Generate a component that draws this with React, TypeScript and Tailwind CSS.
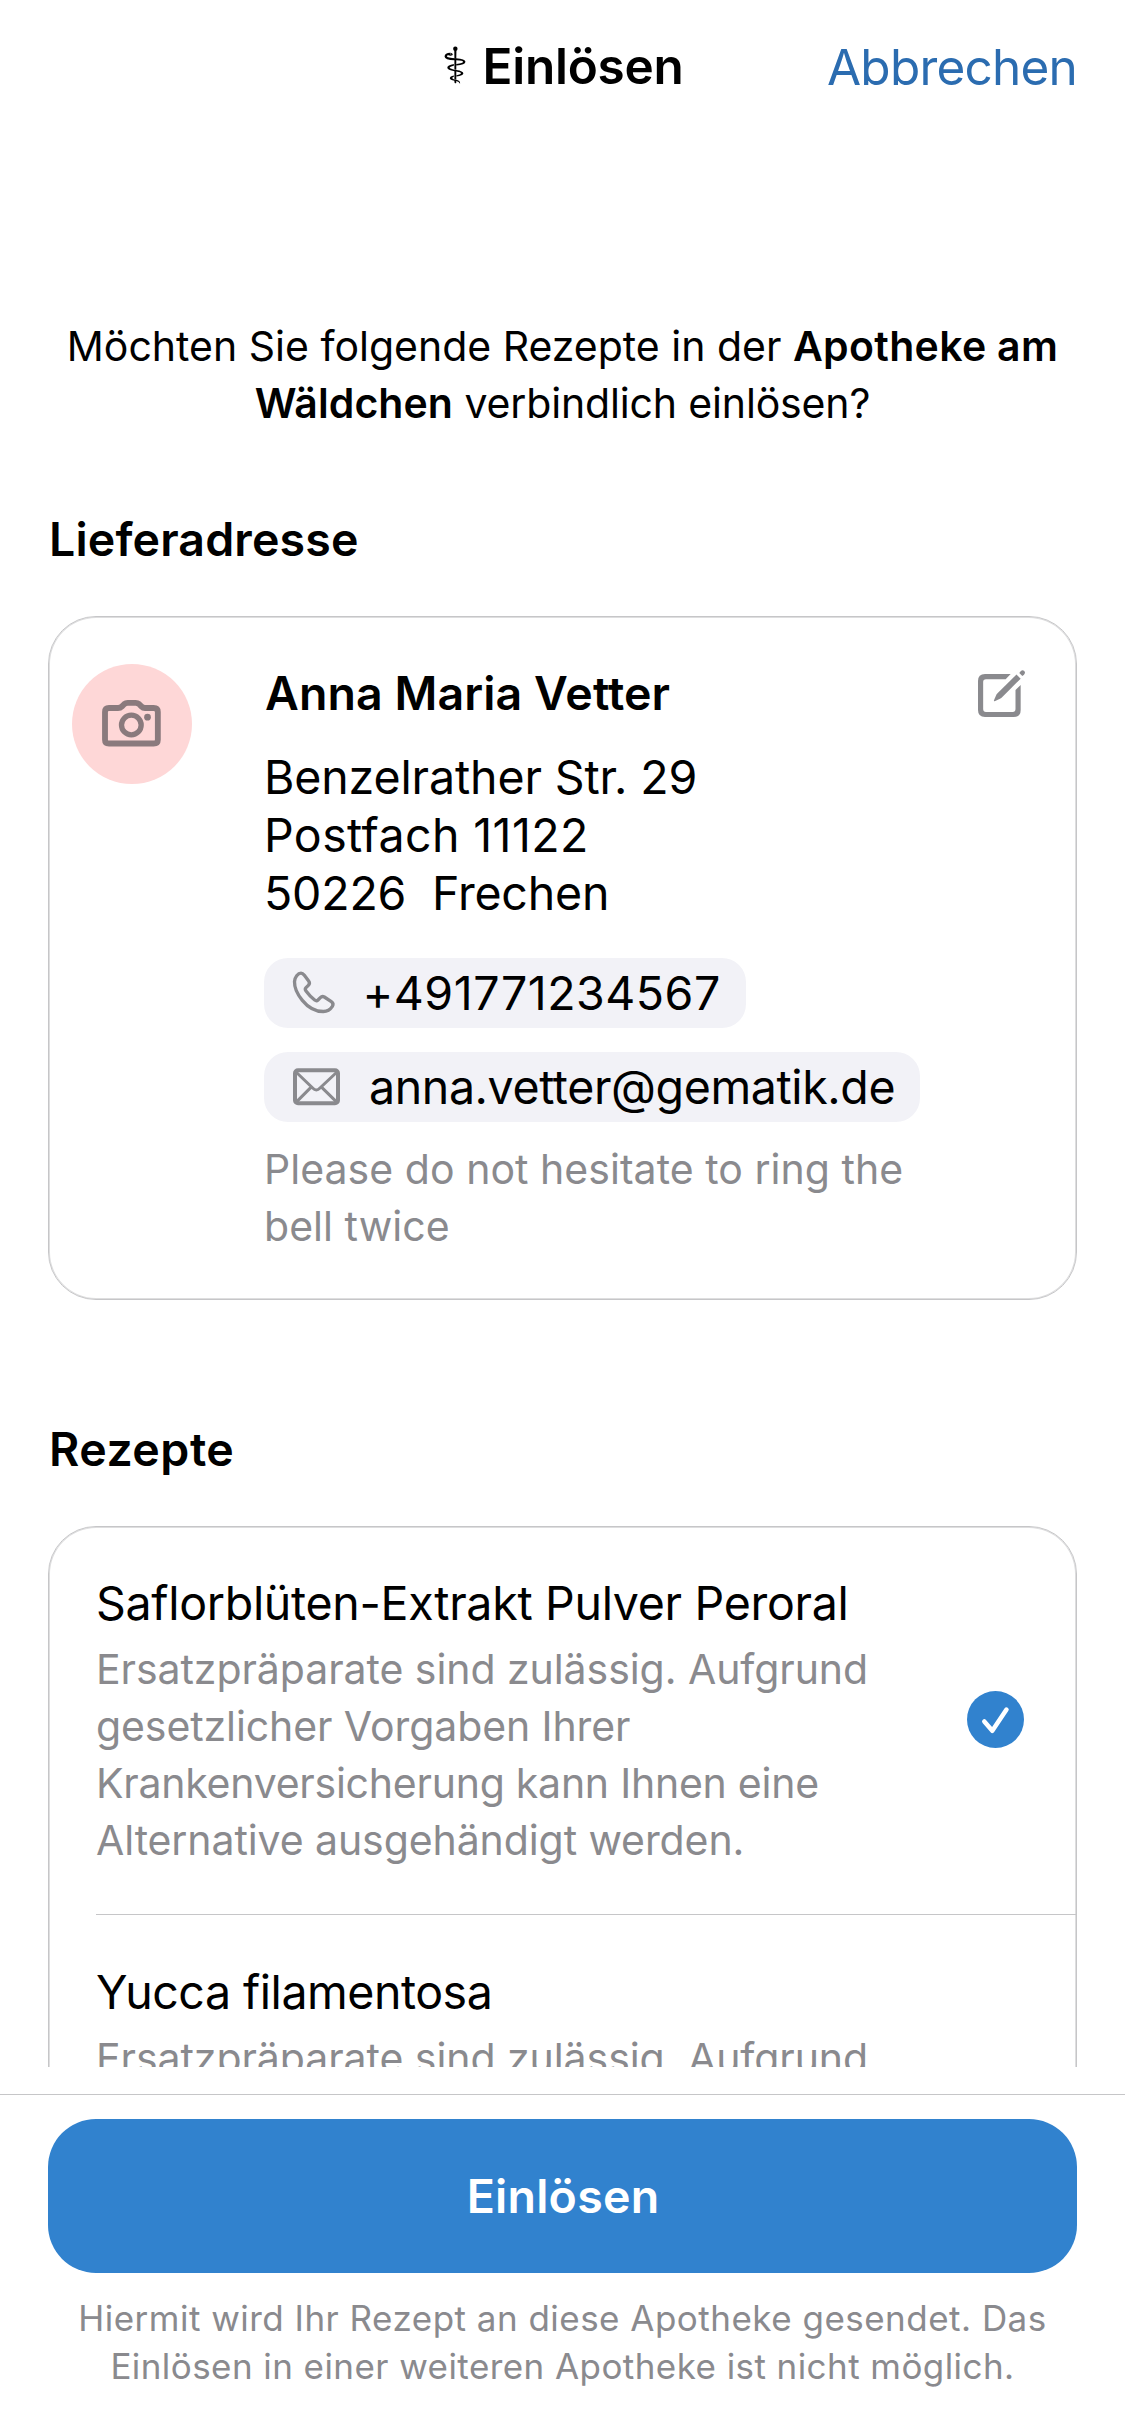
import type { ReactNode } from "react";

function PhoneIcon() {
  return (
    <svg className="size-12 shrink-0" viewBox="60 60 144 144" fill="none" stroke="#8a8a8e" strokeWidth="10" strokeLinejoin="round">
      <path d="M73.500 98C74 84 84 72.500 93 72.500C97 72.500 100 75 103 79L116 96C119 100 119 105 115 109L108 116C105 119 105 122 108 126C116 137 125 146 134 153C138 156 141 156 144 153L151 146C155 142 159 142 163 144L184 158C190 162 190 167 187 172C180 183 170 187.500 160 187.500C138 187.500 114 175 97 154C82 136 73 116 73.500 98Z" />
    </svg>
  );
}

function MailIcon() {
  return (
    <svg className="h-[39px] w-[49px] shrink-0" viewBox="66 351 147 117" fill="none" stroke="#8a8a8e">
      <rect x="75" y="360.500" width="129" height="99" rx="9" strokeWidth="12" />
      <path d="M78 366L128 414Q139 426 150 414L201 366M78 457L122 413M201 457L156 413" strokeWidth="9" />
    </svg>
  );
}

function CameraIcon() {
  return (
    <svg className="mr-px mb-px h-[50px] w-[63px]" viewBox="168 260 189 150" fill="none" stroke="#8a7a7d">
      <path
        d="M195 290H222Q229 290 234 285L241 278Q245 274.500 251 274.500H275Q281 274.500 285 278L292 285Q297 290 303 290H329Q341.500 290 341.500 302V385Q341.500 396.500 329 396.500H195Q183 396.500 183 385V302Q183 290 195 290Z"
        strokeWidth="17.500"
        strokeLinejoin="round"
      />
      <circle cx="262" cy="341" r="29.500" strokeWidth="16" />
      <circle cx="310.500" cy="317.500" r="10" fill="#8a7a7d" stroke="none" />
    </svg>
  );
}

function EditIcon() {
  return (
    <svg className="mt-1 size-[51px] shrink-0" viewBox="48 54 153 153" fill="#8a8a8e">
      <path d="M75 72H152L137 87.500H78Q69.500 87.500 69.500 96V177Q69.500 186 78 186H158Q166.500 186 166.500 177V120L182 105V180Q182 201 161 201H75Q54 201 54 180V93Q54 72 75 72Z" />
      <path d="M102 151L109 134Q111 131 114 128L169.500 73.500L182 86L127 141Q124 144 120 146L104 153.500Q101 154 102 151Z" />
      <path d="M178 69L182 64Q187 58 192 62.500Q198 68 192 74L187 78Z" />
    </svg>
  );
}

function CheckBadge() {
  return (
    <svg className="mb-px size-[57px] shrink-0" viewBox="0 0 57 57" fill="none">
      <circle cx="28.500" cy="28.500" r="28.500" fill="#3182ce" />
      <path d="M17.300 30.500L25.300 39.800L39.500 18.500" stroke="#fff" strokeWidth="4.500" strokeLinecap="round" strokeLinejoin="round" />
    </svg>
  );
}

function Heading({ children, className }: { children: ReactNode; className: string }) {
  return <h2 className={`pl-px text-[46.5px] leading-[58px] font-semibold whitespace-nowrap ${className}`}>{children}</h2>;
}

function Description({ children }: { children: ReactNode }) {
  return <p className="mt-[8.6px] text-[41px] leading-[57px] whitespace-nowrap text-[#8a8a8e]">{children}</p>;
}

const cardBorder = "border border-[#c6c6c8] shadow-[inset_0_0_0_1px_#dededf]";

export default function App() {
  return (
    <div className="flex h-[2436px] w-[1125px] flex-col overflow-hidden bg-white font-['Inter','Liberation_Sans',sans-serif] text-black">
      <header className="grid h-[132px] shrink-0 grid-cols-[1fr_auto_1fr] items-center px-12 text-[49.5px] leading-[60px]">
        <span />
        <h1 className="flex items-center gap-[14px] whitespace-nowrap">
          <span className="font-['DejaVu_Sans',sans-serif] text-[50px]">⚕</span>
          <span className="font-semibold tracking-[-0.25px]">Einlösen</span>
        </h1>
        <button className="mt-px justify-self-end tracking-[-0.79px] text-[#2b6cb0]">Abbrechen</button>
      </header>

      <main className="h-[1935px] shrink-0 overflow-hidden px-12 pt-[185.6px]">
        <p className="text-center text-[41px] leading-[57px] whitespace-nowrap">
          <span className="block">
            Möchten Sie folgende Rezepte in der <b className="font-semibold tracking-[0.32px]">Apotheke am</b>
          </span>
          <span className="block">
            <b className="font-semibold tracking-[0.05px]">Wäldchen</b>{" "}
            <span className="tracking-[-0.15px]">verbindlich einlösen?</span>
          </span>
        </p>

        <Heading className="mt-[78.4px] tracking-[0.15px]">Lieferadresse</Heading>
        <section className={`mt-12 flex h-[684px] items-start rounded-[48px] pt-[47px] pr-[49px] pl-[23px] ${cardBorder}`}>
          <div className="flex size-[120px] shrink-0 items-center justify-center rounded-full bg-[#fed7d7]">
            <CameraIcon />
          </div>
          <div className="ml-[72px] flex flex-1 flex-col items-start whitespace-nowrap">
            <Heading className="tracking-[0.08px]">Anna Maria Vetter</Heading>
            <p className="mt-[26px] text-[46.5px] leading-[58px]">
              <span className="block tracking-[-0.13px]">Benzelrather Str. 29</span>
              <span className="block tracking-[0.4px]">Postfach 11122</span>
              <span className="block tracking-[-0.19px] whitespace-pre">50226  Frechen</span>
            </p>
            <div className="mt-9 flex h-[70px] w-[482px] items-center gap-[24.5px] rounded-[24px] bg-[#f2f2f7] pl-[26px] text-[46.5px] tracking-[0.52px]">
              <PhoneIcon />
              <span className="pt-px">+491771234567</span>
            </div>
            <div className="mt-6 flex h-[70px] w-[656px] items-center gap-7 rounded-[24px] bg-[#f2f2f7] pl-7 text-[46.5px] tracking-[-0.39px]">
              <MailIcon />
              <span className="pt-px">anna.vetter@gematik.de</span>
            </div>
            <p className="mt-[18.6px] text-[41px] leading-[57px] tracking-[0.04px] text-[#8a8a8e]">
              Please do not hesitate to ring the
              <br />
              bell twice
            </p>
          </div>
          <EditIcon />
        </section>

        <Heading className="mt-[120px] tracking-[0.5px]">Rezepte</Heading>
        <section className={`mt-12 h-[774px] rounded-[48px] pl-[47px] ${cardBorder}`}>
          <div className="flex h-[388px] items-start justify-between border-b border-[#c6c6c8] pr-[52px]">
            <div className="pt-[47px]">
              <h3 className="text-[46.5px] leading-[58px] tracking-[-0.3px] whitespace-nowrap">Saflorblüten-Extrakt Pulver Peroral</h3>
              <Description>
                <span className="block tracking-[-0.06px]">Ersatzpräparate sind zulässig. Aufgrund</span>
                <span className="block tracking-[-0.09px]">gesetzlicher Vorgaben Ihrer</span>
                <span className="block tracking-[-0.24px]">Krankenversicherung kann Ihnen eine</span>
                <span className="block tracking-[-0.09px]">Alternative ausgehändigt werden.</span>
              </Description>
            </div>
            <div className="self-center">
              <CheckBadge />
            </div>
          </div>
          <div className="pt-12">
            <h3 className="text-[46.5px] leading-[58px] tracking-[-0.48px] whitespace-nowrap">Yucca filamentosa</h3>
            <Description>
              <span className="block tracking-[-0.06px]">Ersatzpräparate sind zulässig. Aufgrund</span>
            </Description>
          </div>
        </section>
      </main>

      <footer className="mt-[27px] flex flex-1 flex-col border-t border-[#c6c6c8] px-12 pt-6">
        <button className="flex h-[154px] shrink-0 items-center justify-center rounded-[48px] bg-[#3182ce] pl-px text-[46.5px] leading-[58px] font-semibold tracking-[0.25px] text-white">
          Einlösen
        </button>
        <p className="mt-[20.5px] text-center text-[35px] leading-[48px] whitespace-nowrap text-[#8a8a8e]">
          <span className="block tracking-[0.48px]">Hiermit wird Ihr Rezept an diese Apotheke gesendet. Das</span>
          <span className="block tracking-[0.43px]">Einlösen in einer weiteren Apotheke ist nicht möglich.</span>
        </p>
      </footer>
    </div>
  );
}
